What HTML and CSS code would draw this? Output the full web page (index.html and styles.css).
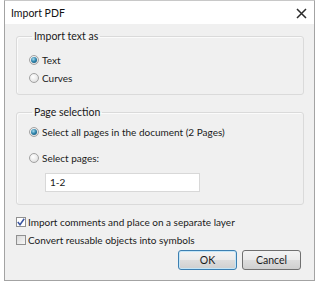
FILE: index.html
```html
<!DOCTYPE html>
<html lang="en">
<head>
    <meta charset="UTF-8">
    <meta name="viewport" content="width=device-width, initial-scale=1.0">
    <title>Import PDF</title>
    <link rel="stylesheet" href="styles.css">
</head>
<body>

    <div class="dialog">
        <!-- Title bar -->
        <div class="titlebar">
            <span class="title">Import PDF</span>
            <svg class="close" width="11" height="11" viewBox="0 0 11 11">
                <path d="M1 1 L10 10 M10 1 L1 10" stroke="#2b2b2b" stroke-width="1.5" fill="none"/>
            </svg>
        </div>

        <div class="dialog-body">
            <!-- Import text as -->
            <fieldset class="group group-text">
                <legend>Import text as</legend>
                <label class="option"><span class="radio checked"></span>Text</label>
                <label class="option"><span class="radio"></span>Curves</label>
            </fieldset>

            <!-- Page selection -->
            <fieldset class="group group-pages">
                <legend>Page selection</legend>
                <label class="option"><span class="radio checked"></span>Select all pages in the document (2 Pages)</label>
                <label class="option"><span class="radio"></span>Select pages:</label>
                <div class="page-range">1-2</div>
            </fieldset>

            <label class="check-row first"><span class="checkbox checked">
                <svg width="8" height="8" viewBox="0 0 8 8"><path d="M0.8 4 L3 6.8 L7.2 0.8" stroke="#3a55a0" stroke-width="1.5" fill="none"/></svg>
            </span>Import comments and place on a separate layer</label>
            <label class="check-row"><span class="checkbox"></span>Convert reusable objects into symbols</label>

            <div class="buttons">
                <button class="btn btn-default">OK</button>
                <button class="btn">Cancel</button>
            </div>
        </div>
    </div>

</body>
</html>
```

FILE: styles.css
```css
* {
    margin: 0;
    padding: 0;
    box-sizing: border-box;
}

body {
    background: #ffffff;
    font-family: Lato, "Noto Sans", sans-serif;
    font-size: 10px;
    color: #1a1a1a;
}

/* Window frame */
.dialog {
    margin-left: 4px;
    width: 311px;
    height: 281px;
    border: 1px solid #a3a3a3;
    border-top-color: #c8c8c8;
    background: #ffffff;
    display: flex;
    flex-direction: column;
}

.titlebar {
    height: 23px;
    display: flex;
    align-items: center;
    justify-content: space-between;
    padding: 0 7px 0 6px;
}

.title {
    font-size: 10.5px;
    color: #111;
}

.close {
    margin-top: 2px;
}

.dialog-body {
    flex: 1;
    background: #f0f0f0;
    padding: 5px 10px 0 11px;
}

/* Group boxes */
.group {
    border: 1px solid #dadada;
    border-radius: 3px;
    box-shadow: inset 1px 1px 0 #fbfbfb;
    padding: 0 0 0 12px;
}

.group legend {
    margin-left: 3px;
    padding: 0 2px;
    line-height: 14px;
    font-size: 10.5px;
}

.group-text {
    height: 66px;
    padding-top: 8px;
}

.group-pages {
    margin-top: 10px;
    height: 100px;
    padding-top: 4px;
}

.option {
    display: flex;
    align-items: center;
    height: 18px;
}

.group-pages .option:first-of-type {
    margin-bottom: 8px;
}

/* Radio buttons */
.radio {
    width: 10px;
    height: 10px;
    border-radius: 50%;
    border: 1px solid #a2a2a2;
    background: radial-gradient(circle at 40% 35%, #ffffff 0%, #e8e8e8 60%, #d2d2d2 100%);
    margin-right: 3px;
    display: flex;
    align-items: center;
    justify-content: center;
}

.radio.checked::after {
    content: "";
    width: 6px;
    height: 6px;
    border-radius: 50%;
    background: radial-gradient(circle at 40% 35%, #a6dcf0 0%, #2b80a8 50%, #124b6c 100%);
}

.page-range {
    margin: 6px 0 0 16px;
    width: 155px;
    height: 19px;
    border: 1px solid #d8d8d8;
    background: #ffffff;
    padding: 1px 4px;
    line-height: 15px;
}

/* Checkboxes */
.check-row {
    display: flex;
    align-items: center;
    height: 18px;
}

.check-row.first {
    margin-top: 8px;
}

.checkbox {
    width: 10px;
    height: 10px;
    border: 1px solid #909090;
    background: linear-gradient(135deg, #d8d8d8, #f8f8f8);
    margin-right: 2px;
    display: flex;
    align-items: center;
    justify-content: center;
}

.checkbox.checked {
    background: #ffffff;
}

/* Buttons */
.buttons {
    display: flex;
    justify-content: flex-end;
    gap: 5px;
    margin-top: 1px;
    padding-right: 3px;
}

.btn {
    width: 59px;
    height: 20px;
    font-family: inherit;
    font-size: 10.5px;
    color: #1a1a1a;
    border: 1px solid #707070;
    border-radius: 3px;
    background: linear-gradient(#f3f3f3 0%, #ebebeb 48%, #dddddd 52%, #cfcfcf 100%);
}

.btn-default {
    border-color: #3c7fb1;
    box-shadow: inset 0 0 0 1px #c4e6f8;
}
```
